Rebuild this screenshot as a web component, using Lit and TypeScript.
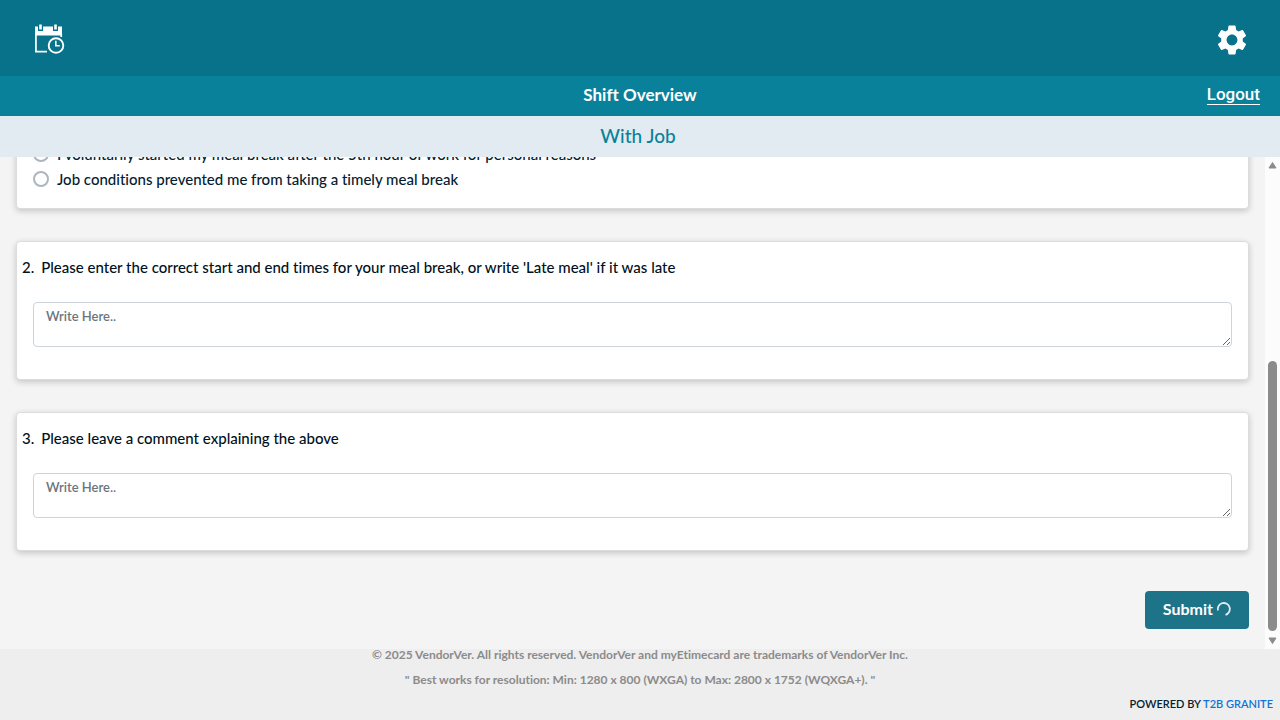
import { LitElement, html, css } from "lit";
import { customElement } from "lit/decorators.js";

interface Question {
  id: string;
  number: number;
  text: string;
}

const OPTIONS = [
  "I voluntarily started my meal break after the 5th hour of work for personal reasons",
  "Job conditions prevented me from taking a timely meal break",
];

const QUESTIONS: Question[] = [
  {
    id: "q2",
    number: 2,
    text: "Please enter the correct start and end times for your meal break, or write 'Late meal' if it was late",
  },
  { id: "q3", number: 3, text: "Please leave a comment explaining the above" },
];

@customElement("app-root")
export class AppRoot extends LitElement {
  static styles = css`
    :host {
      display: flex;
      flex-direction: column;
      height: 100vh;
      overflow: hidden;
      background: #f4f4f4;
      color: #04202f;
      font-family: Lato, "Open Sans", sans-serif;
      font-size: 15px;
      font-weight: 500;
      font-variant-ligatures: none;
      line-height: 20px;
    }
    * {
      box-sizing: border-box;
    }
    .top {
      display: flex;
      justify-content: space-between;
      align-items: center;
      flex: none;
      height: 76px;
      padding: 3px 33px 0 32px;
      background: #08728a;
    }
    .icon-button {
      display: flex;
      padding: 0;
      border: 0;
      background: none;
      cursor: pointer;
    }
    .title-bar {
      display: grid;
      grid-template-columns: 1fr auto 1fr;
      align-items: center;
      flex: none;
      height: 40px;
      padding: 0 20px 2px;
      background: #0a819b;
      color: #fff;
    }
    .title {
      grid-column: 2;
      margin: 0;
      font-size: 17px;
      font-weight: 700;
    }
    .logout {
      justify-self: end;
      border-bottom: 1px solid #fff;
      color: #fff;
      font-family: Roboto, sans-serif;
      font-size: 17px;
      font-weight: 500;
      line-height: 19px;
      text-decoration: none;
    }
    .subtitle {
      flex: none;
      margin: 0;
      padding: 10px 4px 11px 0;
      background: #e3ebf2;
      color: #0a819b;
      font-size: 19px;
      font-weight: 500;
      line-height: 20px;
      text-align: center;
    }
    .body {
      display: flex;
      flex: 1;
      min-height: 0;
    }
    .form {
      display: flex;
      flex: 1;
      flex-direction: column;
      justify-content: flex-end;
      gap: 32px;
      overflow: hidden;
      padding: 0 16px 20px;
    }
    .card {
      flex: none;
      margin: 0;
      padding: 15px 16px 32px;
      border: 1px solid #dcdcdc;
      border-radius: 4px;
      background: #fff;
      box-shadow: 0 2px 6px rgba(0, 0, 0, 0.2);
    }
    .choices {
      display: flex;
      flex-direction: column;
      gap: 5px;
      padding-bottom: 19px;
    }
    .choice {
      display: flex;
      align-items: center;
      gap: 8px;
    }
    .radio {
      appearance: none;
      width: 16px;
      height: 16px;
      margin: 0;
      border: 2px solid #adb5bd;
      border-radius: 50%;
      background: #fff;
    }
    .question {
      display: flex;
      gap: 7px;
      margin: 0 0 25px -11px;
      color: #001020;
    }
    .answer {
      display: block;
      width: 100%;
      height: 45px;
      padding: 3px 12px;
      border: 1px solid #ced4da;
      border-radius: 4px;
      background: #fff;
      color: #04202f;
      font: inherit;
      font-size: 13px;
      font-weight: 600;
      resize: vertical;
    }
    .answer::placeholder {
      color: #6c757d;
    }
    .submit {
      display: flex;
      align-items: center;
      justify-content: center;
      align-self: flex-end;
      flex: none;
      gap: 4px;
      height: 38px;
      margin-top: 8px;
      padding: 0 18px 2px;
      border: 0;
      border-radius: 4px;
      background: #1d7489;
      color: #fff;
      font: inherit;
      font-size: 16px;
      font-weight: 700;
    }
    .scrollbar {
      display: flex;
      flex: none;
      flex-direction: column;
      align-items: center;
      width: 15px;
      padding: 4px 0;
      background: #fcfcfc;
    }
    .track {
      display: flex;
      flex: 1;
      flex-direction: column;
      justify-content: flex-end;
      padding: 4px 0 6px;
    }
    .thumb {
      width: 9px;
      height: 59%;
      border-radius: 5px;
      background: #8b8b8b;
    }
    .footer {
      display: flex;
      flex: none;
      flex-direction: column;
      height: 71px;
      background: #eee;
      color: #8b8b8b;
      font-size: 12px;
      font-weight: 700;
      line-height: 12px;
      text-align: center;
    }
    .note {
      margin: 0 0 13px;
    }
    .powered {
      margin: 0;
      padding: 0 7px;
      color: #04202f;
      font-size: 11px;
      font-weight: 600;
      line-height: 10px;
      text-align: right;
    }
    .brand {
      color: #1273d6;
      text-decoration: none;
    }
  `;

  render() {
    return html`
      <header class="top">
        <button class="icon-button" aria-label="Schedule">
          <svg width="34" height="34" viewBox="0 1 34 34" fill="none">
            <path d="M3 4.500h3v4.500h5V4.500h10v4.500h5V4.500h4v9H3z" fill="#fff" />
            <path d="M7.200 2.500h2.600V7.500H7.200zM22.200 2.500h2.600V7.500H22.200z" fill="#fff" />
            <path d="M3.900 13v16.600H15M29.200 12v3" stroke="#fff" stroke-width="1.800" />
            <circle cx="24" cy="23.500" r="7.300" stroke="#fff" stroke-width="1.900" />
            <path d="M23.800 18.800v5h4" stroke="#fff" stroke-width="1.600" />
          </svg>
        </button>
        <button class="icon-button" aria-label="Settings">
          <svg width="30" height="30" viewBox="2 2 20 20">
            <path
              fill="#fff"
              d="M19.140 12.940c.04-.3.06-.61.06-.94 0-.32-.02-.64-.07-.94l2.030-1.580a.49.49 0 0 0 .12-.61l-1.920-3.320a.488.488 0 0 0-.59-.22l-2.390.96c-.5-.38-1.030-.7-1.620-.94l-.36-2.540a.484.484 0 0 0-.48-.41h-3.840c-.24 0-.43.17-.47.41l-.36 2.540c-.59.24-1.130.57-1.620.94l-2.390-.96c-.22-.08-.47 0-.59.22L2.740 8.870c-.12.21-.08.47.12.61l2.030 1.580c-.05.3-.09.63-.09.94s.02.64.07.94l-2.030 1.580a.49.49 0 0 0-.12.61l1.920 3.320c.12.22.37.29.59.22l2.390-.96c.5.38 1.030.7 1.620.94l.36 2.540c.05.24.24.41.48.41h3.840c.24 0 .44-.17.47-.41l.36-2.540c.59-.24 1.130-.56 1.620-.94l2.390.96c.22.08.47 0 .59-.22l1.920-3.320c.12-.22.07-.47-.12-.61l-2.010-1.580zM12 15.600c-1.980 0-3.600-1.620-3.600-3.600s1.620-3.600 3.600-3.600 3.600 1.620 3.600 3.600-1.620 3.600-3.600 3.600z"
            />
          </svg>
        </button>
      </header>
      <div class="title-bar">
        <h1 class="title">Shift Overview</h1>
        <a class="logout" href="#">Logout</a>
      </div>
      <h2 class="subtitle">With Job</h2>
      <div class="body">
        <form class="form">
          <div class="card choices" role="radiogroup" aria-label="Meal break">
            ${OPTIONS.map(
              (text) => html`<label class="choice"
                ><input class="radio" type="radio" name="reason" />${text}</label
              >`
            )}
          </div>
          ${QUESTIONS.map(
            (q) => html`<div class="card">
              <label class="question" for=${q.id}
                ><span>${q.number}.</span><span>${q.text}</span></label
              >
              <textarea class="answer" id=${q.id} placeholder="Write Here.."></textarea>
            </div>`
          )}
          <button class="submit" type="button">
            Submit
            <svg width="14" height="14" viewBox="0 0 14 14" fill="none">
              <path
                d="M1 8.500A6 6 0 1 1 8.500 12.800"
                stroke="#fff"
                stroke-opacity="0.85"
                stroke-width="1.800"
              />
            </svg>
          </button>
        </form>
        <div class="scrollbar" aria-hidden="true">
          <svg width="9" height="8" viewBox="0 0 9 8">
            <path d="M4.500 1.500 8 7H1z" fill="#8b8b8b" stroke="#8b8b8b" stroke-linejoin="round" />
          </svg>
          <div class="track"><div class="thumb"></div></div>
          <svg width="9" height="8" viewBox="0 0 9 8">
            <path d="M4.500 6.500 8 1H1z" fill="#8b8b8b" stroke="#8b8b8b" stroke-linejoin="round" />
          </svg>
        </div>
      </div>
      <footer class="footer">
        <p class="note">
          © 2025 VendorVer. All rights reserved. VendorVer and myEtimecard are trademarks of
          VendorVer Inc.
        </p>
        <p class="note">
          " Best works for resolution: Min: 1280 x 800 (WXGA) to Max: 2800 x 1752 (WQXGA+). "
        </p>
        <p class="powered">POWERED BY <a class="brand" href="#">T2B GRANITE</a></p>
      </footer>
    `;
  }
}
